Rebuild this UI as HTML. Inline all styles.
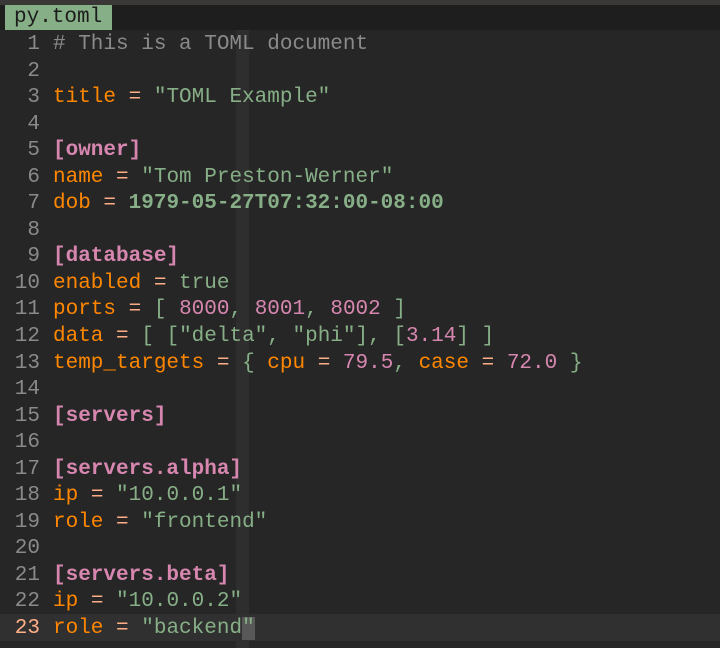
<html><head><style>
body{margin:0;width:720px;height:648px;background:#262626;overflow:hidden;font-family:"Liberation Mono",monospace;font-size:21px;position:relative}
#top{position:absolute;left:0;top:0;width:720px;height:5px;background:#3a3836}
#tabrow{position:absolute;left:0;top:5px;width:720px;height:25px;background:#1e1e1e}
#tab{position:absolute;left:5px;top:5px;width:107px;height:25px;background:#87af87;color:#1c1c1c;line-height:25px;padding-left:9px;box-sizing:border-box}
#col{position:absolute;left:236px;top:30px;width:12.6px;height:618px;background:#2e2e2e}
#cur{position:absolute;left:0;top:614px;width:720px;height:26.5px;background:#303030}
#code{position:absolute;left:0;top:32px;white-space:pre;line-height:26.55px;color:#d0d0d0}
.n{color:#8a8a8a;display:inline-block;width:40px;text-align:right;margin-right:13px}
.c{color:#8a8a8a}.k{color:#ff8700}.s{color:#87af87}.p{color:#d787af}.h{color:#d787af;font-weight:bold}.e{color:#ffaf87}.b{color:#87af87;font-weight:bold}
.cn{color:#ffaf87}.cursor{background:#585858}
</style></head><body>
<div id="top"></div><div id="tabrow"></div><div id="tab">py.toml</div>
<div id="col"></div><div id="cur"></div>
<div id="code"><span class="n">1</span><span class="c"># This is a TOML document</span>
<span class="n">2</span>
<span class="n">3</span><span class="k">title</span> <span class="e">=</span> <span class="s">"TOML Example"</span>
<span class="n">4</span>
<span class="n">5</span><span class="h">[owner]</span>
<span class="n">6</span><span class="k">name</span> <span class="e">=</span> <span class="s">"Tom Preston-Werner"</span>
<span class="n">7</span><span class="k">dob</span> <span class="e">=</span> <span class="b">1979-05-27T07:32:00-08:00</span>
<span class="n">8</span>
<span class="n">9</span><span class="h">[database]</span>
<span class="n">10</span><span class="k">enabled</span> <span class="e">=</span> <span class="s">true</span>
<span class="n">11</span><span class="k">ports</span> <span class="e">=</span> <span class="s">[</span> <span class="p">8000</span><span class="s">,</span> <span class="p">8001</span><span class="s">,</span> <span class="p">8002</span> <span class="s">]</span>
<span class="n">12</span><span class="k">data</span> <span class="e">=</span> <span class="s">[ [</span><span class="s">"delta"</span><span class="s">,</span> <span class="s">"phi"</span><span class="s">], [</span><span class="p">3.14</span><span class="s">] ]</span>
<span class="n">13</span><span class="k">temp_targets</span> <span class="e">=</span> <span class="s">{</span> <span class="k">cpu</span> <span class="e">=</span> <span class="p">79.5</span><span class="s">,</span> <span class="k">case</span> <span class="e">=</span> <span class="p">72.0</span> <span class="s">}</span>
<span class="n">14</span>
<span class="n">15</span><span class="h">[servers]</span>
<span class="n">16</span>
<span class="n">17</span><span class="h">[servers.alpha]</span>
<span class="n">18</span><span class="k">ip</span> <span class="e">=</span> <span class="s">"10.0.0.1"</span>
<span class="n">19</span><span class="k">role</span> <span class="e">=</span> <span class="s">"frontend"</span>
<span class="n">20</span>
<span class="n">21</span><span class="h">[servers.beta]</span>
<span class="n">22</span><span class="k">ip</span> <span class="e">=</span> <span class="s">"10.0.0.2"</span>
<span class="n cn">23</span><span class="k">role</span> <span class="e">=</span> <span class="s">"backend<span class="cursor">"</span></span></div>
</body></html>
